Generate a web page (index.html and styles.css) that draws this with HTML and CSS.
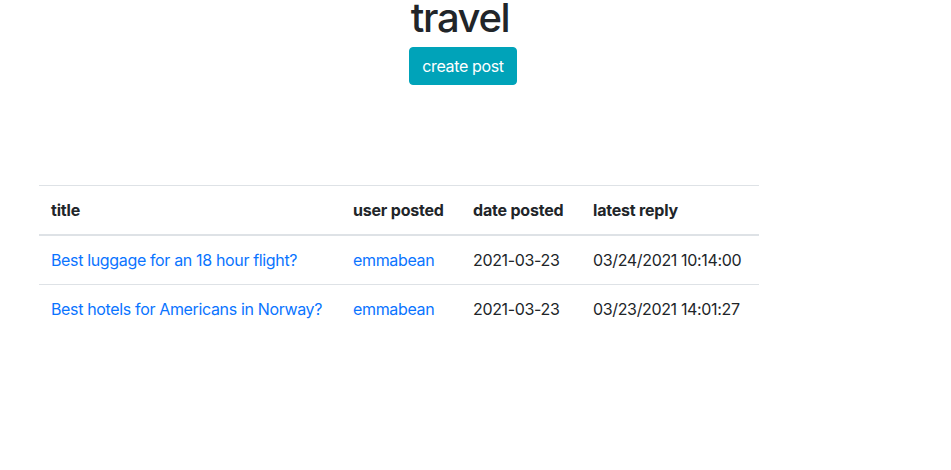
FILE: index.html
```html
<!DOCTYPE html>
<html>
<head>
<meta charset="utf-8">
<link rel="stylesheet" href="styles.css">
</head>
<body>
<header class="header">
  <h1 class="title">travel</h1>
  <a class="btn-create" href="#">create post</a>
</header>
<main class="content">
  <table class="posts">
    <thead>
      <tr>
        <th class="col-title">title</th>
        <th class="col-user">user posted</th>
        <th class="col-date">date posted</th>
        <th class="col-reply">latest reply</th>
      </tr>
    </thead>
    <tbody>
      <tr>
        <td><a href="#">Best luggage for an 18 hour flight?</a></td>
        <td><a href="#">emmabean</a></td>
        <td>2021-03-23</td>
        <td>03/24/2021 10:14:00</td>
      </tr>
      <tr>
        <td><a href="#">Best hotels for Americans in Norway?</a></td>
        <td><a href="#">emmabean</a></td>
        <td>2021-03-23</td>
        <td>03/23/2021 14:01:27</td>
      </tr>
    </tbody>
  </table>
</main>
</body>
</html>
```
FILE: styles.css
```css
* { box-sizing: border-box; }
html, body { margin: 0; padding: 0; background: #fff; }
body {
  font-family: Inter, "Noto Sans", sans-serif;
  font-size: 16px;
  line-height: 1.5;
  letter-spacing: -0.35px;
  color: #212529;
}
.header {
  width: 926px;
  display: flex;
  flex-direction: column;
  align-items: center;
}
.title {
  margin: 0 6px 11px 0;
  font-size: 40px;
  font-weight: 500;
  line-height: 36px;
  letter-spacing: -1.4px;
}
.btn-create {
  display: inline-block;
  padding: 6px 12px;
  border: 1px solid #00a3b9;
  border-radius: 4px;
  background: #00a3b9;
  color: #fff;
  text-decoration: none;
  line-height: 24px;
}
.content {
  padding: 100px 0 0 39px;
}
.posts {
  width: 720px;
  border-collapse: collapse;
}
.posts th, .posts td {
  padding: 12px;
  text-align: left;
  vertical-align: top;
  border-top: 1px solid #dee2e6;
  white-space: nowrap;
}
.posts thead th {
  border-bottom: 2px solid #dee2e6;
  font-weight: 700;
  letter-spacing: -0.2px;
}
.col-title { width: 302px; }
.col-user { width: 120px; }
.col-date { width: 120px; }
.col-reply { width: 178px; }
.posts a { color: #0a74ff; text-decoration: none; }
```
